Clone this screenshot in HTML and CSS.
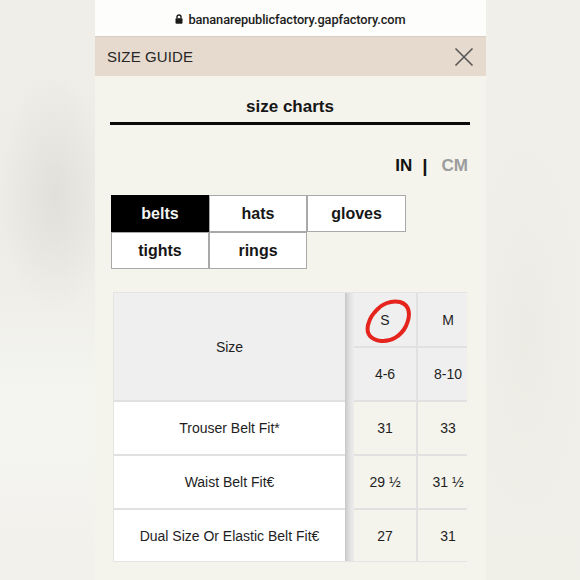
FILE: index.html
```html
<!DOCTYPE html>
<html>
<head>
<meta charset="utf-8">
<link rel="stylesheet" href="styles.css">
</head>
<body>
<div class="stage">
  <div class="side side-left"></div>
  <div class="phone">
    <div class="urlbar">
      <svg class="lock" width="8" height="10" viewBox="0 0 8 10"><path d="M2 4.5V3a2 2 0 0 1 4 0v1.5" fill="none" stroke="#1a1a1a" stroke-width="1.4"/><rect x="0.5" y="4.3" width="7" height="5.4" rx="1" fill="#1a1a1a"/></svg>
      <span>bananarepublicfactory.gapfactory.com</span>
    </div>
    <div class="guide-head">
      <span class="guide-title">SIZE GUIDE</span>
      <svg class="close" width="20" height="20" viewBox="0 0 20 20"><path d="M1.5 1.5L18.5 18.5M18.5 1.5L1.5 18.5" stroke="#555" stroke-width="1.6" fill="none"/></svg>
    </div>
    <div class="content">
      <div class="charts-title">size charts</div>
      <div class="units"><span class="unit-on">IN</span><span class="unit-sep">|</span><span class="unit-off">CM</span></div>
      <div class="tabs">
        <div class="tab tab-active">belts</div>
        <div class="tab">hats</div>
        <div class="tab">gloves</div>
        <div class="tab">tights</div>
        <div class="tab">rings</div>
      </div>
      <div class="chart">
        <div class="cell head label size-head">Size</div>
        <div class="shade"></div>
        <div class="cell head num s-col mark-cell">S
          <svg class="mark" width="64" height="53" viewBox="0 0 64 53"><path d="M21 19 C 27 11, 37 7, 46 9 C 56 12, 57 22, 52 33 C 47 43, 37 49, 27 48 C 17 47, 12 41, 14 32 C 16 24, 20 19, 25 15" fill="none" stroke="#e5241e" stroke-width="4" stroke-linecap="round"/></svg>
        </div>
        <div class="cell head num">M</div>
        <div class="cell head num s-col">4-6</div>
        <div class="cell head num">8-10</div>

        <div class="cell label">Trouser Belt Fit*</div>
        <div class="cell num s-col">31</div>
        <div class="cell num">33</div>

        <div class="cell label">Waist Belt Fit€</div>
        <div class="cell num s-col">29 ½</div>
        <div class="cell num">31 ½</div>

        <div class="cell label">Dual Size Or Elastic Belt Fit€</div>
        <div class="cell num s-col">27</div>
        <div class="cell num">31</div>
      </div>
    </div>
  </div>
  <div class="side side-right"></div>
</div>
</body>
</html>
```

FILE: styles.css
```css
* { box-sizing: border-box; }
html, body { margin: 0; padding: 0; }
body {
  width: 580px;
  height: 580px;
  overflow: hidden;
  font-family: "Liberation Sans", Arial, sans-serif;
  color: #1a1a1a;
  background: #f1f0ea;
}
.stage {
  display: flex;
  width: 580px;
  height: 580px;
}
.side { height: 580px; }
.side-left {
  width: 95px;
  background:
    radial-gradient(ellipse 55px 120px at 55px 195px, rgba(214,213,206,0.55), rgba(214,213,206,0) 100%),
    linear-gradient(to bottom, #efeee9 0%, #edece6 40%, #f4f4f1 70%, #f2f1ec 100%);
}
.side-right {
  width: 94px;
  background:
    radial-gradient(ellipse 60px 200px at 40px 330px, rgba(232,231,224,0.5), rgba(232,231,224,0) 100%),
    linear-gradient(to bottom, #f1efe9 0%, #f0efe8 100%);
}
.phone {
  width: 391px;
  height: 580px;
  display: flex;
  flex-direction: column;
  background: #f4f3ec;
}
.urlbar {
  height: 37px;
  background: #fdfdfb;
  display: flex;
  align-items: center;
  justify-content: center;
  gap: 5px;
  padding-top: 3px;
  font-family: Roboto, "Liberation Sans", sans-serif;
  font-size: 12.8px;
  font-weight: 500;
  letter-spacing: -0.1px;
  color: #1c1c1c;
  border-bottom: 1px solid #d9cdc3;
}
.lock { display: block; margin-top: -1px; }
.guide-head {
  height: 39px;
  background: #e6dace;
  display: flex;
  align-items: center;
  justify-content: space-between;
  padding: 0 12px 0 12px;
}
.guide-title {
  font-size: 15px;
  color: #262626;
  letter-spacing: 0.1px;
}
.close { display: block; }
.content {
  flex: 1;
  padding: 20px 16px 0 15px;
  display: flex;
  flex-direction: column;
}
.charts-title {
  text-align: center;
  font-size: 17px;
  font-weight: 700;
  line-height: 22px;
  padding-bottom: 4px;
  border-bottom: 3px solid #0a0a0a;
  color: #161616;
}
.units {
  margin-top: 30px;
  height: 22px;
  line-height: 22px;
  display: flex;
  justify-content: flex-end;
  align-items: center;
  font-size: 17px;
  font-weight: 700;
  padding-right: 2px;
}
.unit-on { color: #111; }
.unit-sep { color: #111; margin: 0 14px 0 10px; font-size: 19px; }
.unit-off { color: #9c9c9c; }
.tabs {
  margin-top: 18px;
  margin-left: 1px;
  display: grid;
  grid-template-columns: 98px 98px 99px;
  grid-auto-rows: 37px;
}
.tab {
  background: #fff;
  border: 1px solid #a9a9a9;
  display: flex;
  align-items: center;
  justify-content: center;
  font-size: 16px;
  font-weight: 700;
  color: #161616;
}
.tab-active {
  background: #000;
  color: #f4f4f4;
  border-color: #000;
}
.chart {
  margin-top: 23px;
  margin-left: 3px;
  width: 354px;
  overflow: hidden;
  display: grid;
  grid-template-columns: 231px 9px 64px 60px;
  grid-template-rows: 53px 52px 52px 52px 51px;
  row-gap: 2px;
  background: #e1e1e1;
  border-top: 1px solid #e4e4e4;
  border-left: 1px solid #e4e4e4;
  border-bottom: 1px solid #e4e4e4;
  align-self: flex-start;
}
.cell {
  display: flex;
  align-items: center;
  justify-content: center;
  font-size: 14px;
  color: #1e1e1e;
}
.label { background: #fff; }
.num { background: #f4f3ec; }
.head { background: #efefef; }
.size-head { grid-row: 1 / 3; grid-column: 1; }
.shade {
  grid-row: 1 / 6;
  grid-column: 2;
  background: linear-gradient(to right, #c6c6c6 0%, #d8d8d8 30%, #e6e6e6 70%, #ececec 100%);
}
.s-col { border-right: 2px solid #e1e1e1; }
.mark-cell { position: relative; }
.mark {
  position: absolute;
  left: 0;
  top: 0;
}
```
